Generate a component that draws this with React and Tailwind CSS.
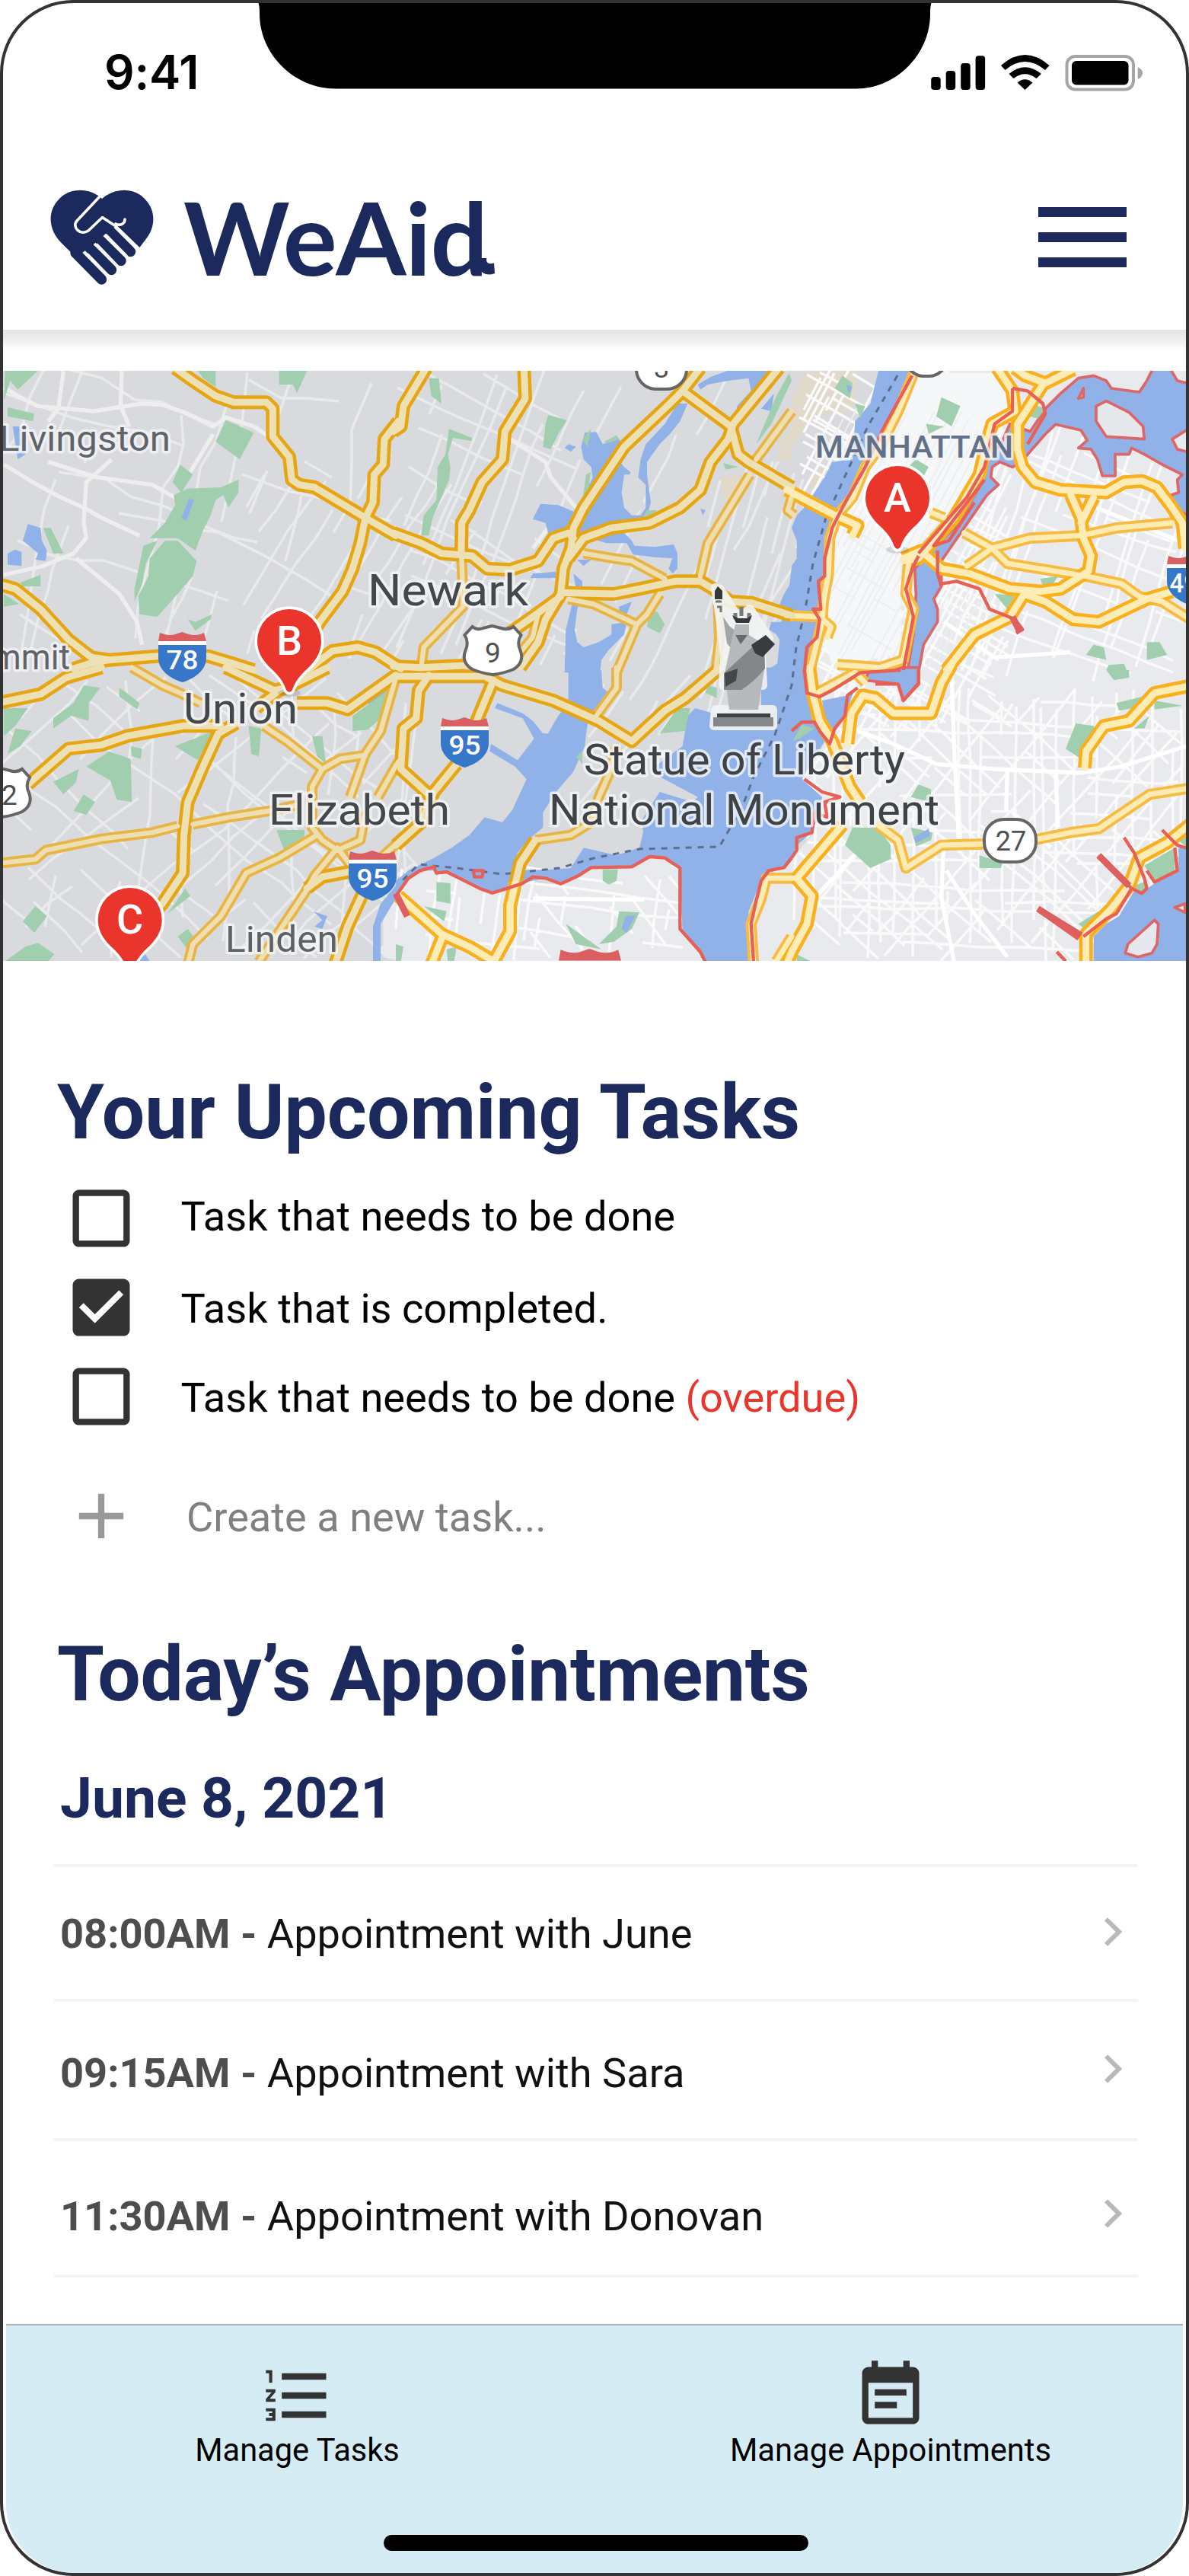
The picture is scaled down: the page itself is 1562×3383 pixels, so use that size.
import React from "react";

/* ---------- Map data: each tile uses its own local units, three per pixel ---------- */

const TILES = { A: [0, 480], B: [520, 480], C: [1040, 480], D: [0, 880], E: [520, 880], F: [1040, 880] };
const at = (t) => `translate(${TILES[t][0]} ${TILES[t][1]}) scale(0.33333)`;
const line = (s) => "M" + s.trim().split(/\s+/).join("L");
const area = (s) => line(s) + "Z";

const MAJOR = [
  ["A", "690,10 760,60 850,120 920,145 1050,145 1075,170 1075,280 1140,360 1150,450 1180,470 1240,480 1340,540 1440,600 1560,670"],
  ["A", "1570,220 1515,290 1510,390 1475,430 1470,540 1440,600 1420,700 1390,800 1350,890 1260,1010 1200,1110"],
  ["A", "-10,860 60,880 160,960 270,1080 360,1150 430,1160 620,1145 720,1140 820,1145 920,1175 1000,1200"],
  ["A", "290,1195 350,1175 430,1160"],
  ["A", "1180,1230 1250,1170 1310,1125 1410,1110 1480,1130 1580,1195"],
  ["B", "120,10 60,110 30,160 20,240 -10,260"],
  ["B", "505,10 510,130 430,260 420,370 340,460 290,570 260,620 258,730"],
  ["B", "-10,660 100,700 180,740 300,750 360,800 450,805 560,770 620,680 680,660 700,680"],
  ["B", "1200,10 1130,100 1080,150 900,320 820,440 740,560 700,640 690,720 660,800 650,900 590,1000 560,1090 490,1190"],
  ["B", "1130,100 1320,240 1350,350 1390,380 1560,480"],
  ["B", "1510,10 1330,230 1310,290 1240,380 1200,490 1120,560 1000,620 850,640 740,680 680,760"],
  ["B", "650,895 860,900 960,880 1100,850 1200,850 1250,880 1320,930 1400,935 1560,985"],
  ["B", "650,910 540,990 440,1060"],
  ["B", "-10,1185 100,1190 270,1182"],
  ["D", "-10,130 160,95 260,30 400,-10"],
  ["D", "110,450 270,310 400,295 500,260 720,220 870,220"],
  ["D", "930,210 860,250 800,380 740,520 725,650 720,800 640,920 560,1010 500,1130"],
  ["D", "890,-10 1080,80 1130,70 1290,-10"],
  ["D", "1010,150 1100,80"],
  ["D", "1170,130 1290,130 1370,155 1560,20"],
  ["D", "1320,1160 1370,1010 1430,880"],
  ["D", "1210,860 1270,815 1400,790"],
  ["E", "0,25 350,25 420,60 620,120 800,200 930,280 1060,160 1140,110 1280,-10"],
  ["E", "130,20 90,80 80,190 30,230 20,390 130,490"],
  ["E", "385,40 310,220"],
  ["E", "240,370 150,480 100,600 0,690"],
  ["E", "550,670 490,760 450,930 450,1030 390,1140"],
];

const SECONDARY = [
  ["B", "258,730 262,830 265,950 110,1110 100,1190"],
  ["B", "1560,180 1420,370"],
  ["B", "1395,430 1230,700 1200,830"],
  ["B", "740,740 860,760 930,770 1060,840"],
  ["B", "680,920 780,940 950,1020 870,1210"],
  ["B", "1040,900 990,980 950,1020"],
  ["B", "1270,940 1275,1080 1260,1210"],
  ["B", "1560,520 1545,570 1570,590"],
  ["B", "560,980 540,1070 450,1180"],
  ["D", "520,-10 640,60 720,95 790,130"],
  ["D", "-10,762 140,745 180,710 400,665 600,640 700,615"],
  ["D", "760,608 900,580 1060,555 1180,530"],
  ["D", "1040,220 1130,280 1270,390 1340,350 1440,335"],
  ["D", "1270,390 1230,460 1230,620 1270,670 1330,710 1420,670 1440,560"],
  ["D", "740,1160 760,1080 870,970 970,800 1100,740 1250,650"],
  ["D", "1020,1150 1200,880 1240,810 1330,700 1390,780"],
  ["D", "1560,30 1500,240 1440,330 1380,500"],
  ["D", "1570,360 1490,500"],
  ["D", "1590,660 1500,740"],
  ["E", "870,-10 870,70 790,180"],
  ["E", "870,300 840,410 800,500 770,600 690,650 550,670"],
];

const NY_MAJOR = [
  ["C", "810,10 870,100 880,180 790,230 770,300 740,430 640,600 500,760 440,770"],
  ["C", "1110,15 1000,70 920,40 880,10"],
  ["C", "990,75 930,170 890,230 890,330 910,400 960,460 1060,490 1240,500 1310,460 1380,455 1440,480 1500,560 1540,620 1550,720"],
  ["C", "-20,490 170,590 260,630 240,670"],
  ["C", "440,760 510,730 590,800 700,820 860,880 980,890 1060,880 1170,810 1180,750 1150,680 1140,600 1100,510"],
  ["C", "1190,520 1140,620"],
  ["C", "915,900 1000,930 1110,1000 1210,1010 1400,920 1500,890"],
  ["C", "910,910 860,990 720,1060 610,1200"],
  ["E", "10,890 180,1040 290,1090 390,1150"],
  ["E", "180,1060 140,1160"],
  ["E", "470,840 450,930 450,1030 385,1150"],
  ["F", "70,-10 85,100 110,200 160,280 230,460 270,520"],
  ["F", "220,290 235,170 280,100 330,110 400,170 550,170 590,50 630,-20"],
  ["F", "200,610 20,820 80,890 60,1000 0,1110 -20,1160"],
  ["F", "1155,385 1160,320 1230,220 1330,200 1430,90 1580,60"],
  ["F", "1580,600 1480,680 1370,740 1330,850 1260,940 1160,1040 1160,1160"],
];

const NY_SECONDARY = [
  ["C", "490,10 420,180 350,320 290,400 240,520 180,590 150,680 145,820 125,930 120,1010 90,1130 70,1210"],
  ["C", "-20,985 110,990 155,1030 140,1070"],
  ["C", "460,780 450,900 480,960 440,1160 350,1190 180,1178"],
  ["C", "680,660 790,720 940,680 1140,670 1280,640 1500,620"],
  ["C", "690,790 790,720 850,780 1160,830 1300,860 1370,910 1460,930 1570,1000"],
  ["C", "550,580 600,600"],
  ["E", "1580,820 1460,820 1440,900 1400,1000 1410,1160"],
  ["E", "1560,1050 1500,1147"],
  ["F", "100,90 250,10 290,50"],
  ["F", "340,610 420,670 450,780 590,690 760,685 960,668 1100,640 1210,625 1410,490 1570,465"],
];

const WATER = [
  ["B", "745,265 790,262 815,310 840,300 880,290 890,310 860,350 900,400 925,420 890,500 900,560 930,590 965,590 985,560 985,470 955,440 965,370 985,310 1060,230 1110,150 1150,150 1120,220 1080,270 1040,310 990,380 990,430 1005,540 990,590 880,640 930,690 940,710 1020,715 1095,705 1110,740 1110,800 1090,820 1075,800 1090,760 1020,755 935,745 910,700 830,700 700,660 600,660 590,620 540,605 570,545 640,550 700,575 730,540 775,440 770,400 740,370 730,320"],
  ["B", "540,820 630,812 630,838 530,838"],
  ["B", "715,765 770,765 740,790"],
  ["B", "700,820 735,850 735,900 715,960 705,1040 715,1090 740,1110 800,1090 850,1060 850,1020 910,1010 900,1060 840,1120 810,1160 805,1210 665,1210 670,1040 690,960 710,880"],
  ["B", "880,950 930,930 910,980 880,980"],
  ["B", "1190,75 1240,45 1310,20 1500,20 1450,60 1380,180 1340,190 1345,160 1400,100 1390,50 1310,60 1230,75 1200,95"],
  ["B", "1440,170 1490,110 1480,180"],
  ["B", "1580,820 1530,900 1505,960 1580,970"],
  ["B", "1580,1010 1480,1010 1470,1040 1500,1060 1530,1110 1510,1170 1450,1210 1580,1210"],
  ["B", "680,310 710,320 690,340 665,325"],
  ["B", "1200,565 1220,570 1210,590"],
  ["C", "345,10 480,10 465,60 370,240 310,360 250,460 220,540 180,600 150,680 135,820 105,920 100,980 110,1040 90,1110 50,1180 40,1210 -60,1210 -40,1010 -40,960 -10,880 0,790 20,760 20,690 0,640 20,590 40,570 90,500 130,440 160,380 240,370 250,220 310,150 330,70"],
  ["A", "110,625 160,640 165,690 185,730 180,770 140,765 150,740 90,690"],
  ["A", "30,740 60,725 85,735 85,790 30,785"],
  ["A", "50,240 80,240 100,350 70,370"],
  ["D", "1450,130 1545,50 1530,100 1460,150"],
  ["D", "1235,950 1290,970 1270,1020 1240,1010 1270,985"],
  ["D", "1500,920 1560,850 1560,900 1500,1000 1500,1147 1470,1147 1470,1010"],
  ["D", "560,1100 590,1147 540,1147"],
  ["E", "680,0 810,0 815,70 840,90 800,170 760,190 750,250 745,300 700,400 640,470 600,530 580,560 580,620 520,670 480,720 455,790 460,820 490,840 440,860 380,880 330,860 270,830 210,800 150,790 95,790 50,820 0,880 0,830 50,790 150,740 220,700 290,650 350,580 420,600 460,550 515,430 470,380 370,320 375,290 480,355 545,270 500,190 390,150 400,130 500,170 540,200 580,250 600,250 640,180 680,130"],
  ["E", "1440,-10 1610,-10 1620,90 1640,190 1690,280 1600,430 1680,500 1670,560 1640,640 1580,690 1560,740 1530,780 1470,790 1440,830 1390,950 1395,1150 1220,1150 1200,1110 1130,1030 1120,780 1060,740 1000,730 930,775 770,780 710,820 650,840 590,820 490,840 455,830 490,790 620,785 690,780 740,700 870,730 960,700 975,640 970,590 1040,480 1170,520 1190,500 1040,420 1020,380 1130,300 1150,180 1180,150 1250,170 1440,150"],
  ["F", "120,120 220,100 250,70 210,180 160,260 140,250"],
  ["F", "1570,690 1525,700 1525,790 1430,840 1390,870 1350,870 1290,970 1240,1000 1190,1050 1190,1160 1570,1160"],
];

const NY_WATER = [
  ["C", "1000,170 1060,110 1130,50 1190,40 1240,60 1260,90 1370,105 1400,60 1425,10 1490,10 1520,60 1580,75 1580,240 1500,290 1520,330 1580,345 1580,600 1500,560 1470,520 1525,500 1520,450 1540,430 1460,390 1390,350 1340,325 1330,350 1275,350 1275,435 1225,435 1205,370 1180,330 1130,325 1165,295 1140,255 1040,232 1000,270 900,385 870,400 820,380 790,400 785,440 815,470 770,510 700,610 590,770 590,870 560,920 575,960 575,1010 520,1100 500,1210 455,1210 480,1060 490,900 485,800 540,740 640,640 740,480 760,390 830,300 860,230 940,260"],
  ["F", "290,40 310,-10 500,-10 500,50 440,120 420,55"],
];

const PARKS = [
  ["A", "20,20 150,20 70,95 40,60 15,140"], ["A", "30,165 135,190 130,220 30,200"], ["A", "890,215 1000,265 945,370 850,300"],
  ["A", "710,390 760,430 715,500 680,460"], ["A", "870,480 940,450 940,500 900,560 880,510 850,530 830,590 800,650 770,730 700,680 590,680 650,620 690,550 685,510 740,485"],
  ["A", "650,690 700,690 775,770 760,830 700,900 620,990 550,980 545,910 585,830 590,760"], ["A", "565,710 620,690 575,780 560,860 530,930 530,880"],
  ["A", "780,20 850,20 850,85 800,50"], ["A", "1100,20 1210,20 1170,110 1155,75 1100,75"], ["A", "80,855 160,825 160,870 90,870"],
  ["A", "15,900 75,940 15,950"], ["A", "170,640 200,640 250,740 210,740"], ["A", "740,1000 770,1010 835,980 830,1000 770,1045"],
  ["B", "130,50 170,50 180,150 140,120"], ["B", "210,250 300,285 300,298 225,285 205,350 215,400 210,450 180,520 145,600 130,670 100,670 110,590 160,530 165,400 195,350"],
  ["B", "600,195 675,215 640,270 610,330 580,320 590,230"], ["B", "735,290 770,250 755,320"], ["B", "750,430 768,420 755,530 735,535"], ["B", "820,300 870,275 880,290 840,305"],
  ["B", "990,570 1030,570 1000,600 970,600"], ["B", "1000,970 1030,970 1060,1020 1040,1055 990,1030"], ["B", "1500,120 1550,30 1560,60 1480,230 1420,310"], ["B", "1290,385 1350,400 1300,410"],
  ["C", "590,125 665,160 630,240 570,200"], ["C", "530,230 600,240 540,270"], ["C", "460,400 490,370 540,400 520,435"], ["C", "200,40 240,70 230,130 170,90"], ["C", "250,150 290,160 270,210"],
  ["C", "980,840 1050,830 1030,860 990,870"], ["C", "800,900 880,905 850,960"], ["C", "1190,1100 1230,1110 1240,1160 1160,1140"], ["C", "1400,1090 1450,1090 1480,1140 1400,1160"], ["C", "950,150 1000,170 970,210 940,200"], ["C", "1250,1180 1310,1175 1320,1200 1240,1200"],
  ["D", "15,150 110,150 60,220 15,260"], ["D", "60,230 125,240 80,300 30,330"], ["D", "330,60 395,70 350,130 350,200 280,180 210,230 210,190 290,130"],
  ["D", "340,380 430,320 515,350 520,520 460,510 435,435"], ["D", "515,300 560,310 555,350 520,340"], ["D", "690,300 840,240 780,355"], ["D", "980,220 1030,230 1020,340 990,330"],
  ["D", "1230,260 1270,260 1285,370 1250,340"], ["D", "1390,180 1540,70 1500,190 1450,235 1390,240"], ["D", "210,440 310,390 300,440 250,490"], ["D", "330,490 375,520 340,570 290,555"],
  ["D", "1090,630 1200,630 1200,665 1120,710"], ["D", "140,930 185,970 135,1035 90,990"], ["D", "100,1090 150,1075 215,1120 190,1147 20,1147"], ["D", "700,1050 740,1020 770,1060 735,1095"], ["D", "470,70 500,90 550,130 540,155 470,105"], ["D", "730,860 750,890 660,960"],
  ["E", "160,835 215,840 215,920 160,910"], ["E", "815,785 875,785 870,830 840,845 815,830"], ["E", "880,950 960,955 930,1020 860,1070 800,1080 870,1010"], ["E", "670,1000 740,1050 810,1100 710,1080"],
  ["E", "1230,60 1265,70 1265,110 1220,90"], ["E", "1110,150 1160,150 1140,240 1040,250"], ["E", "110,930 200,950 190,990"], ["E", "0,1080 30,1090 20,1147 0,1147"], ["E", "200,1100 240,1090 230,1147 205,1147"], ["E", "710,340 735,320 735,370"],
  ["F", "240,620 340,620 390,690 390,745 310,780 210,690"], ["F", "470,500 500,450 550,470 545,520"], ["F", "470,620 555,640 550,670 490,695"], ["F", "740,730 830,760 825,780 740,780"],
  ["F", "1120,210 1190,220 1200,240 1140,350 1080,310"], ["F", "1240,0 1330,0 1330,30 1270,40"], ["F", "1280,130 1400,100 1350,150 1290,160"], ["F", "1350,230 1410,180 1390,230"],
  ["F", "1430,120 1540,140 1430,155"], ["F", "1390,770 1510,700 1510,790 1430,830"], ["F", "1350,850 1400,830 1395,875 1360,880"], ["F", "1130,1000 1210,950 1170,1030"], ["F", "5,280 40,215 90,230 30,270"], ["F", "1510,660 1560,640 1560,700"], ["F", "20,1120 75,1147 20,1147"],
];

const COAST = [
  ["C", "475,40 360,250 290,400 200,560 160,640 130,760 130,830 105,850 115,960 85,960 110,1000 100,1070 60,1110 50,1210"],
  ["C", "590,860 650,850 740,880 780,960 880,1000 910,1040 885,1055"],
  ["C", "870,90 930,100 990,150 1000,190 930,310"],
  ["C", "870,90 870,180 800,230 760,400 690,520 500,740"],
  ["C", "760,450 560,710 620,690 720,540"],
  ["C", "500,750 475,800 450,880 480,990 440,1200"],
  ["C", "575,730 575,820 590,870"],
  ["E", "0,890 50,820 95,790 150,775 160,800 200,795 270,830 330,860 380,878 440,860 500,840 540,815 590,820 650,842 720,810 770,778 930,775 1000,735 1060,740 1120,780 1120,1020 1200,1110 1220,1150"],
  ["E", "1560,740 1530,778 1470,790 1440,830 1420,910 1400,1000 1410,1150"],
  ["E", "305,790 345,790 340,815 310,815 305,790"],
  ["F", "50,0 60,90 110,105 160,80 270,10 430,0"],
  ["F", "330,55 420,55 440,120 500,55 500,0"],
  ["F", "260,70 220,100 210,180 170,230 150,290 110,240 90,205 40,205 0,240"],
  ["F", "50,430 120,480 190,500 130,520 140,580 90,560 80,640 20,660 20,710 0,740"],
  ["F", "1310,660 1350,720 1390,820 1400,860 1380,880 1340,860"],
  ["F", "1460,630 1520,690 1570,705"], ["F", "1510,700 1520,790 1430,835 1400,790"],
  ["F", "1210,730 1290,810 1340,860 1280,960 1240,980 1150,1050"],
  ["F", "970,940 1140,1040"], ["F", "975,950 1130,1060"], ["F", "1045,1110 1080,1147"],
];

/* Deterministic generator for the fine street mesh. */
function mesh(seed, [x0, y0, x1, y1], degrees, gap, wobble) {
  let s = seed;
  const rnd = () => {
    s = (s * 16807) % 2147483647;
    return s / 2147483647;
  };
  const a = (degrees * Math.PI) / 180;
  const dx = Math.cos(a), dy = Math.sin(a);
  const cx = (x0 + x1) / 2, cy = (y0 + y1) / 2;
  const r = Math.hypot(x1 - x0, y1 - y0) / 2;
  let d = "";
  for (let o = -r; o < r; o += gap * (0.55 + rnd() * 0.9)) {
    let t = -r, drift = 0, pen = false;
    while (t < r) {
      const x = cx + dx * t - dy * (o + drift);
      const y = cy + dy * t + dx * (o + drift);
      const inside = x > x0 && x < x1 && y > y0 && y < y1;
      if (inside && rnd() > 0.16) {
        d += `${pen ? "L" : "M"}${x.toFixed(0)} ${y.toFixed(0)}`;
        pen = true;
      } else pen = false;
      drift += (rnd() - 0.5) * wobble;
      t += 28 + rnd() * 40;
    }
  }
  return d;
}

const NJ_STREETS = [
  mesh(11, [0, 480, 520, 880], 20, 62, 26), mesh(12, [0, 480, 520, 880], 105, 58, 26),
  mesh(13, [320, 620, 640, 880], -58, 24, 8), mesh(14, [520, 480, 780, 880], 112, 26, 8), mesh(15, [520, 480, 780, 880], 28, 48, 14),
  mesh(16, [0, 880, 560, 1263], 40, 34, 14), mesh(17, [0, 880, 560, 1263], -42, 38, 14), mesh(18, [0, 880, 560, 1263], 92, 60, 16),
  mesh(19, [780, 480, 1240, 960], 118, 38, 10), mesh(20, [920, 600, 1100, 960], 105, 13, 3), mesh(21, [740, 880, 960, 1100], -50, 30, 8),
].join("");

const NY_STREETS = [
  mesh(31, [1050, 480, 1330, 960], 118, 9, 2), mesh(32, [1050, 480, 1330, 960], 30, 10, 2),
  mesh(33, [1230, 520, 1562, 900], 22, 26, 8), mesh(34, [1230, 520, 1562, 900], 108, 22, 8),
  mesh(35, [1040, 900, 1562, 1263], 2, 22, 6), mesh(36, [1040, 900, 1562, 1263], 90, 19, 4), mesh(37, [1040, 900, 1562, 1263], 42, 26, 6), mesh(38, [1040, 900, 1562, 1263], -50, 26, 6),
  mesh(39, [520, 1130, 940, 1263], 8, 24, 8), mesh(40, [520, 1130, 940, 1263], 98, 24, 8), mesh(41, [680, 1130, 940, 1263], 50, 26, 6),
].join("");

function Roads({ list, width, color, cap = "butt" }) {
  return (
    <g fill="none" stroke={color} strokeWidth={width} strokeLinejoin="round" strokeLinecap={cap}>
      {list.map(([t, p], i) => <path key={i} d={line(p)} transform={at(t)} />)}
    </g>
  );
}

function Areas({ list, fill, stroke = "none", strokeWidth = 0 }) {
  return (
    <g fill={fill} stroke={stroke} strokeWidth={strokeWidth} strokeLinejoin="round">
      {list.map(([t, p], i) => <path key={i} d={area(p)} transform={at(t)} />)}
    </g>
  );
}

function Label({ x, y, w, size, color = "#44474b", weight = 400, children }) {
  return (
    <text x={x} y={y} textLength={w} lengthAdjust="spacingAndGlyphs" fontSize={size} fontWeight={weight} fill={color}
      stroke="#f4f5f6" strokeOpacity="0.8" strokeWidth="7" strokeLinejoin="round" paintOrder="stroke">
      {children}
    </text>
  );
}

function Interstate({ x, y, text, w = 63 }) {
  return (
    <g transform={`translate(${x} ${y}) scale(${w / 63})`}>
      <path d="M2 1L8 3Q16 5 22 3L31 0L40 3Q47 5 55 3L60 1L63 12V18H0V12Z" fill="#d95f61" />
      <rect y="12" width="63" height="5" fill="#fff" />
      <path d="M0 17H63V34C63 50 48 61 31.500 66C15 61 0 50 0 34Z" fill="#3777c9" />
      <text x="31.500" y="49" textAnchor="middle" fontSize="35" fontWeight="500" fill="#fff" textLength={text.length > 2 ? 56 : 42} lengthAdjust="spacingAndGlyphs">{text}</text>
    </g>
  );
}

function UsRoute({ x, y, text }) {
  return (
    <g transform={`translate(${x} ${y})`}>
      <path d="M12 3Q18 8 26 5L38 2L50 5Q59 8 66 3L76 14Q70 24 75 34Q81 50 66 59Q54 64 39 66Q24 64 12 59Q-3 50 3 34Q8 24 2 14Z" fill="#fff" stroke="#666" strokeWidth="4" />
      <text x="39" y="50" textAnchor="middle" fontSize="37" fill="#4f5052">{text}</text>
    </g>
  );
}

function Pin({ x, y, letter }) {
  return (
    <g transform={`translate(${x} ${y})`}>
      <ellipse cx="0" cy="68" rx="15" ry="5" fill="#000" opacity="0.12" />
      <path d="M0 -42A42 42 0 0 1 42 0C42 14 35 25 26 34C15 44 8 52 4 64Q0 70 -4 64C-8 52 -15 44 -26 34C-35 25 -42 14 -42 0A42 42 0 0 1 0 -42Z" fill="#e9352c" stroke="#fff" strokeWidth="7" paintOrder="stroke" />
      <text y="17.500" textAnchor="middle" fontSize="54" fontWeight="500" fill="#fff">{letter}</text>
    </g>
  );
}

function Statue() {
  return (
    <g>
      <g stroke="#f3f4f4" strokeWidth="12" strokeLinejoin="round" opacity="0.9">
        <path d="M940 772L946 774L970 812L985 800L1010 838L1000 860L1002 900H950L952 860L946 810Z" fill="#f3f4f4" />
        <path d="M940 932H1015V953H938Z" fill="#f3f4f4" />
      </g>
      <path d="M939 776L943 770L949 776V787H939Z" fill="#34383b" />
      <path d="M940 790H948M942 797H947V804" stroke="#74787b" strokeWidth="3" fill="none" />
      <path d="M950 810L958 822L968 830L968 860L955 845Z" fill="#a3a6a9" />
      <path d="M966 813V805M974 809V797M984 813V805" stroke="#777b7e" strokeWidth="5" />
      <path d="M962 808L970 812H981L988 808L984 818H967Z" fill="#34383b" />
      <path d="M966 820H984V834L1003 846L1004 880L996 932H958L952 884L960 846Z" fill="#b7babd" />
      <path d="M988 850L1004 845L1005 878Q990 896 974 906H951V884Z" fill="#84878a" />
      <path d="M966 834H982L973 846Z" fill="#666a6d" />
      <path d="M987 847L1006 834L1018 846L1002 863L992 858Z" fill="#373c3f" />
      <path d="M952 884L969 878L967 894L953 902Z" fill="#42474a" />
      <path d="M942 937H1012V942H942Z" fill="#3c4144" />
      <path d="M937 942H1016V954H937Z" fill="#84888b" />
    </g>
  );
}

function CityMap() {
  return (
    <svg viewBox="4 487 1554 775" className="block h-[775px] w-full shrink-0" fontFamily="Roboto, sans-serif">
      <rect x="0" y="480" width="1562" height="790" fill="#d9dade" />
      <path d={NJ_STREETS} fill="none" stroke="#e9eaeb" strokeWidth="3.400" />
      <Roads color="#eeeeee" width={16} list={[
        ["A", "15,85 70,120 150,160 370,180 560,150 640,155 740,190 840,240 890,205 1000,240 1060,280"],
        ["A", "15,390 130,460 240,520 330,560 400,600 550,670"],
        ["A", "440,370 340,460 330,620 340,680 290,740 170,790 15,825"],
        ["A", "190,380 380,440 600,470 690,520"], ["A", "250,22 230,170 190,220"], ["A", "480,22 475,160 510,240"],
        ["A", "840,270 750,420"], ["A", "300,760 470,900 540,1010 560,1100"],
        ["B", "450,290 590,380 610,440 710,560"], ["B", "600,640 540,720"],
      ]} />
      <Areas fill="#e1dacb" list={[["B", "1280,440 1390,430 1330,520 1290,530"], ["B", "1520,290 1560,240 1560,370 1500,380"], ["C", "50,30 260,20 240,180 90,200 0,320 0,130"], ["C", "60,440 130,400 100,500"]]} />
      <Areas fill="#e8eaed" list={[
        ["C", "480,10 1570,10 1570,1210 40,1210 100,1080 100,980 135,820 150,680 180,600 250,460 370,240"],
        ["F", "60,-10 1570,-10 1570,1160 -170,1160 -160,950 -100,790 0,740 90,640 50,430 130,290 60,110"],
        ["E", "0,890 50,820 150,780 380,878 500,840 650,842 770,778 930,775 1000,735 1060,740 1120,780 1120,1020 1230,1160 0,1160"],
        ["D", "1510,930 1570,880 1570,1147 1510,1130"],
      ]} />
      <path d={NY_STREETS} fill="none" stroke="#fafafb" strokeWidth="3.400" />
      <Areas fill="#f6f7f8" list={[["C", "480,30 840,30 860,180 760,260 700,480 480,730 430,780 430,1140 160,1180 130,1100 160,700 300,420"]]} />
      <path d={mesh(51, [1085, 520, 1290, 890], 118, 9, 1)} fill="none" stroke="#eceef0" strokeWidth="2" />
      <path d={mesh(52, [1095, 690, 1185, 860], 30, 9, 1)} fill="none" stroke="#eceef0" strokeWidth="2" />
      <Roads color="#ffffff" width={16} list={[
        ["F", "260,240 400,290 570,370 800,390 1140,405 1300,380 1554,300"], ["F", "610,790 720,960 850,1130"], ["F", "600,660 590,900 640,1147"],
        ["F", "870,560 960,640 1020,700"], ["F", "630,0 640,300 660,700"], ["F", "850,400 845,560"], ["F", "1040,400 1050,620"], ["F", "80,910 330,640"],
        ["C", "600,1010 800,1150 1100,1130"], ["C", "1200,560 1550,700"], ["E", "540,900 980,905"],
      ]} />
      <Areas fill="#91b2e8" list={WATER} />
      <Areas fill="#91b2e8" stroke="#dd6668" strokeWidth={11} list={NY_WATER} />
      <Areas fill="#e6e8ec" stroke="#dd6668" strokeWidth={11} list={[
        ["C", "1200,160 1240,140 1330,185 1385,240 1390,290 1240,280 1200,220"], ["C", "1130,130 1150,90 1150,125"],
        ["F", "1430,985 1445,1000 1440,1080 1420,1115 1365,1130 1315,1115 1325,1080"], ["F", "1510,935 1550,920 1550,955"],
      ]} />
      <Areas fill="#d9dade" list={[["B", "900,430 930,430 980,550 945,590 910,560 890,500"]]} />
      <Areas fill="#a0ceae" list={PARKS} />
      <Areas fill="#91b2e8" list={[["A", "745,525 765,530 735,610 715,600"], ["E", "905,970 945,965 910,1035 890,1020"], ["F", "480,660 540,625 545,655 490,680"], ["C", "215,75 240,85 225,110"]]} />
      <g fill="none" stroke="#5d6f8c" strokeWidth="3" strokeDasharray="8 8">
        <path d="M1179 493L1140 560L1108 630L1085 680L1068 740L1058 800L1046 850L1040 900L1018 965L990 1020L975 1060L945 1112L840 1115L780 1127L735 1140L660 1148L600 1140L550 1135L525 1160" />
      </g>

      <Roads list={SECONDARY} color="#e8b545" width={42} />
      <Roads list={NY_SECONDARY} color="#f8bb42" width={44} />
      <Roads list={MAJOR} color="#e6a512" width={54} />
      <Roads list={NY_MAJOR} color="#f9b01c" width={54} />
      <Roads list={SECONDARY} color="#eddfb2" width={19} cap="round" />
      <Roads list={NY_SECONDARY} color="#fdebb4" width={21} cap="round" />
      <Roads list={MAJOR} color="#ede0b4" width={27} cap="round" />
      <Roads list={NY_MAJOR} color="#feecb7" width={27} cap="round" />
      <Roads list={COAST} color="#e85f56" width={13} />
      <Roads color="#dd5f60" width={26} list={[["F", "970,940 1140,1045"], ["F", "1210,730 1330,850"], ["E", "0,880 45,970"], ["C", "870,990 900,1050"]]} />

      <Label x={-1} y={591.500} w={225} size={46} color="#60646a">Livingston</Label>
      <Label x={483} y={795} w={211} size={58}>Newark</Label>
      <Label x={-62} y={879} w={154} size={46} color="#60646a">Summit</Label>
      <Label x={241} y={949.500} w={150} size={56}>Union</Label>
      <Label x={353} y={1082.500} w={238} size={56}>Elizabeth</Label>
      <Label x={296} y={1250} w={148} size={49} color="#5e6268">Linden</Label>
      <Label x={767} y={1016.500} w={422} size={56} color="#3f4348">Statue of Liberty</Label>
      <Label x={721} y={1082.500} w={513} size={56} color="#3f4348">National Monument</Label>
      <Label x={1071} y={600.500} w={260} size={41} weight={500} color="#637188">MANHATTAN</Label>

      <Statue />
      <Interstate x={208} y={830} text="78" />
      <Interstate x={579} y={942} text="95" />
      <Interstate x={458} y={1117} text="95" />
      <Interstate x={1533} y={729} text="495" />
      <Interstate x={734} y={1246} text="278" w={82} />
      <UsRoute x={608.500} y={820} text="9" />
      <UsRoute x={-37} y={1007} text="22" />
      <rect x="1293" y="1076" width="68" height="56" rx="26" fill="#fff" stroke="#666" strokeWidth="4" />
      <text x="1328" y="1117" textAnchor="middle" fontSize="36" fill="#4f5052">27</text>
      <rect x="836" y="450" width="66" height="61" rx="26" fill="#fff" stroke="#666" strokeWidth="4" />
      <text x="869" y="496" textAnchor="middle" fontSize="36" fill="#4f5052">3</text>
      <rect x="1190" y="438" width="54" height="56" rx="24" fill="#fff" stroke="#666" strokeWidth="4" />
      <Pin x={1179} y={654} letter="A" />
      <Pin x={380} y={842} letter="B" />
      <Pin x={170.700} y={1208} letter="C" />
    </svg>
  );
}

/* ---------- Chrome ---------- */

const GLYPHS = {
  unchecked: "M19 5v14H5V5h14m0-2H5c-1.100 0-2 .9-2 2v14c0 1.100.9 2 2 2h14c1.100 0 2-.9 2-2V5c0-1.100-.9-2-2-2z",
  checked: "M19 3H5c-1.110 0-2 .9-2 2v14c0 1.100.89 2 2 2h14c1.110 0 2-.9 2-2V5c0-1.100-.89-2-2-2zm-9 14l-5-5 1.410-1.410L10 14.170l7.590-7.590L19 8l-9 9z",
  plus: "M19 13h-6v6h-2v-6H5v-2h6V5h2v6h6v2z",
  list: "M2 17h2v.5H3v1h1v.5H2v1h3v-4H2v1zm1-9h1V4H2v1h1v3zm-1 3h1.800L2 13.100v.9h3v-1H3.200L5 10.900V10H2v1zm5-6v2h14V5H7zm0 14h14v-2H7v2zm0-6h14v-2H7v2z",
  calendar: "M17 10H7v2h10v-2zm2-7h-1V1h-2v2H8V1H6v2H5c-1.110 0-1.990.9-1.990 2L3 19c0 1.100.89 2 2 2h14c1.100 0 2-.9 2-2V5c0-1.100-.9-2-2-2zm0 16H5V8h14v11zm-5-5H7v2h7v-2z",
};

function Glyph({ name, className }) {
  return (
    <svg viewBox="0 0 24 24" fill="currentColor" className={`block size-[100px] shrink-0 ${className}`}>
      <path d={GLYPHS[name]} />
    </svg>
  );
}

function StatusBar() {
  return (
    <div className="flex h-[170px] shrink-0 items-start justify-between">
      <div className="ml-[133px] mt-[50px] font-['Inter'] text-[62px] leading-[82px] font-semibold tracking-[-0.2px] text-black">9:41</div>
      <svg viewBox="1223 70 279 52" className="mr-[56px] mt-[66px] h-[52px] w-[279px]">
        <rect x="1223.200" y="101" width="12.500" height="17" rx="4" />
        <rect x="1242.700" y="93" width="12.500" height="25" rx="4" />
        <rect x="1262.200" y="83" width="12.500" height="35" rx="4" />
        <rect x="1281.600" y="73.300" width="12.500" height="44.700" rx="4" />
        <path d="M1315 86Q1346.500 58 1378.600 86L1373 92Q1346.500 70 1320.500 92Z" />
        <path d="M1325.500 97Q1346.500 79.500 1368 97L1361.500 103Q1346.500 91.500 1331.500 103Z" />
        <path d="M1336.500 108.500Q1346.500 100 1356.500 108.500L1346.500 118Z" />
        <rect x="1401.500" y="74" width="87.500" height="43.500" rx="11" fill="none" stroke="#a6a6a6" strokeWidth="4" />
        <rect x="1408" y="80" width="74.500" height="31.500" rx="6" />
        <path d="M1494.700 88Q1501 91 1501 96Q1501 101 1494.700 104Z" fill="#a6a6a6" />
      </svg>
    </div>
  );
}

function Logo() {
  return (
    <div className="flex items-start text-[#1c295d]">
      <svg viewBox="66 249 137 127" className="mt-[75px] block h-[127px] w-[137px]">
        <path d="M134 261C118 246 92 246 78 261C63 276 63 298 77 315L82 320.500L100 338L124 320L140 306L152 297L183 325.500L191 315C205 298 205 276 190 261C176 246 151 246 134 261Z" fill="currentColor" />
        <g stroke="currentColor" strokeWidth="13.400" strokeLinecap="round">
          <path d="M138 297L171.500 330.500M126 310L159 342.500M113 321L146.500 354.500M99 332L133.500 367" />
        </g>
        <g fill="none" stroke="#fff" strokeWidth="3.600" strokeLinecap="round" strokeLinejoin="round">
          <path d="M132 257L101 290C94 298 105 310 116 303L134.500 285.500L152 297L184 328M152 294C158 297 164 294 164 288" />
          <path d="M139.500 309L166 336M127.500 321.500L153 348M115.500 334.500L140 360" />
        </g>
      </svg>
      <div className="relative ml-[38px] mt-[62px] font-['Lato'] text-[133px] leading-[150px] font-bold tracking-[-0.8px]">
        WeAid
        <svg viewBox="0 0 30 26" className="absolute left-[382px] top-[103px] h-[26px] w-[30px]" fill="currentColor">
          <path d="M2 0H16V3Q17 9 26 6.500L27 20Q14 25 6 14Z" />
        </svg>
      </div>
    </div>
  );
}

function Header() {
  return (
    <header className="flex h-[259px] shrink-0 items-start justify-between bg-white pl-[62px] pr-[78px]">
      <Logo />
      <div className="mt-[98px] flex w-[116px] flex-col gap-[19.500px]">
        <span className="h-[13.400px] bg-[#1c295d]" />
        <span className="h-[13.400px] bg-[#1c295d]" />
        <span className="h-[13.400px] bg-[#1c295d]" />
      </div>
    </header>
  );
}

function Task({ icon, className = "", textClass, children }) {
  return (
    <li className={`flex h-[100px] items-center ${className}`}>
      <Glyph name={icon} className="text-[#333333]" />
      <span className={`ml-[54.500px] text-[54.200px] leading-[64px] whitespace-pre text-black ${textClass}`}>{children}</span>
    </li>
  );
}

function Appointment({ time, who, className, textClass }) {
  return (
    <li className={`flex items-center justify-between border-b-4 border-[#f3f3f3] pl-[8px] pr-[20px] ${className}`}>
      <span className={`text-[54.200px] leading-[64px] whitespace-pre text-[#111] ${textClass}`}>
        <b className="font-bold text-[#4d4d4d]">{time} - </b>Appointment with {who}
      </span>
      <svg viewBox="0 0 24 38" className="-mt-[3px] block h-[38px] w-[24px]" fill="none" stroke="#b9b9b9" strokeWidth="6">
        <path d="M2 2.300L19 19L2 35.700" />
      </svg>
    </li>
  );
}

export default function App() {
  return (
    <div className="relative flex h-[3383px] w-[1562px] flex-col overflow-hidden rounded-[96px] border-4 border-[#333] bg-white font-['Roboto']">
      <svg viewBox="0 0 890 117" className="absolute left-[333px] top-[-4px] h-[117px] w-[890px]">
        <path d="M1 0H888C885 6 885 12 885 20C884 72 840 116.500 788 116.500H104C50 116.500 5 72 4 20C4 12 4 6 1 0Z" />
      </svg>
      <StatusBar />
      <Header />
      <div className="h-[54px] shrink-0 bg-[linear-gradient(#e4e4e4,#efefef_14px,#fdfdfd_26px,#ffffff_34px)]" />
      <CityMap />

      <section className="mt-[149px] shrink-0">
        <h1 className="ml-[71px] text-[100px] leading-[100px] font-bold text-[#1c295d]">Your Upcoming Tasks</h1>
        <ul className="ml-[79px] mt-[39px]">
          <Task icon="unchecked" textClass="-mt-1">Task that needs to be done</Task>
          <Task icon="checked" className="mt-[17px]" textClass="mt-1">Task that is completed.</Task>
          <Task icon="unchecked" className="mt-[17px]" textClass="mt-1">
            Task that needs to be done <span className="text-[#e9352c]">(overdue)</span>
          </Task>
        </ul>
        <div className="ml-[79px] mt-[57px] flex h-[100px] items-center">
          <Glyph name="plus" className="text-[#999999]" />
          <span className="ml-[62px] mt-1 text-[54.200px] leading-[64px] text-[#808080]">Create a new task...</span>
        </div>
      </section>

      <section className="mt-[108px] shrink-0">
        <h1 className="ml-[71px] text-[100px] leading-[100px] font-bold tracking-[-0.2px] text-[#1c295d]">Today’s Appointments</h1>
        <h2 className="ml-[75px] mt-[75px] text-[75px] leading-[75px] font-bold text-[#1c295d]">June 8, 2021</h2>
        <ul className="ml-[67px] mt-[49px] w-[1424px] border-t-4 border-[#f3f3f3]">
          <Appointment time="08:00AM" who="June" className="h-[177px]" textClass="mt-[2px]" />
          <Appointment time="09:15AM" who="Sara" className="h-[183px]" textClass="mt-2" />
          <Appointment time="11:30AM" who="Donovan" className="h-[179px] pt-[18px]" textClass="mt-1" />
        </ul>
      </section>

      <nav className="relative mx-[4px] mt-auto grid h-[327px] shrink-0 grid-cols-2 rounded-b-[90px] border-t-2 border-[#adb3b5] bg-[#d6ecf4]">
        <div className="flex flex-col items-center pr-[8px] pt-[42px]">
          <Glyph name="list" className="text-[#333333]" />
          <span className="mt-[-2px] text-[41.600px] leading-[48px] text-black">Manage Tasks</span>
        </div>
        <div className="flex flex-col items-center pl-[5px] pt-[42px]">
          <Glyph name="calendar" className="text-[#333333]" />
          <span className="mt-[-2px] text-[41.700px] leading-[48px] text-black">Manage Appointments</span>
        </div>
        <span className="absolute bottom-[29px] left-[496px] h-[21px] w-[558px] rounded-full bg-black" />
      </nav>
    </div>
  );
}
